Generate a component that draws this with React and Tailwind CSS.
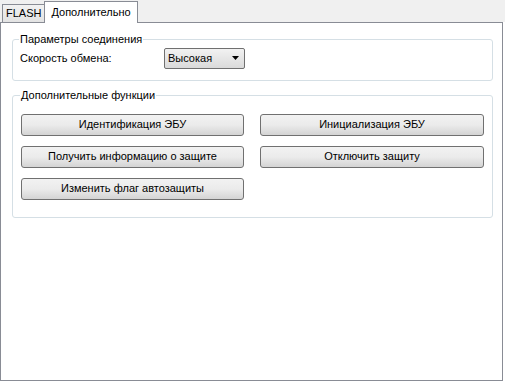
export default function App() {
  const font = { fontFamily: '"Liberation Sans", Arial, sans-serif' };
  const Btn = ({ children, w = 'w-[223px]' }) => (
    <button className={`h-[22px] ${w} rounded-[3px] border border-[#707070] bg-gradient-to-b from-[#f2f2f2] via-[#ebebeb] to-[#d4d4d4] text-[11px] text-black leading-none`}>
      {children}
    </button>
  );
  return (
    <div className="w-[505px] h-[382px] bg-white text-[11px] text-black relative" style={font}>
      <div className="h-[22px] bg-[#f0f0f0] flex items-end pl-[2px]">
        <div className="h-[18px] px-[3px] border border-b-0 border-[#898c95] bg-gradient-to-b from-[#f2f2f2] to-[#e3e3e3] flex items-center">FLASH</div>
        <div className="h-[22px] px-[6px] border border-b-0 border-[#898c95] bg-white flex items-center -mb-px relative z-10 -ml-px">Дополнительно</div>
      </div>
      <div className="h-[359px] w-[503px] border border-[#898c95] bg-white pl-[11px] pr-[9px] pt-[8px]">
        <fieldset className="border border-[#d5dfe5] rounded-[3px] px-[7px] h-[50px]">
          <legend className="px-px -ml-px">Параметры соединения</legend>
          <div className="flex items-center">
            <span className="w-[144px]">Скорость обмена:</span>
            <div className="h-[21px] w-[81px] border border-[#707070] rounded-[2px] bg-gradient-to-b from-[#f2f2f2] to-[#dadada] flex items-center justify-between pl-[3px] pr-[5px]">
              <span>Высокая</span>
              <svg width="7" height="4" viewBox="0 0 7 4"><path d="M0 0h7L3.5 4z" fill="#000" /></svg>
            </div>
          </div>
        </fieldset>
        <fieldset className="mt-[6px] border border-[#d5dfe5] rounded-[3px] px-[8px] pb-[17px]">
          <legend className="px-px -ml-px">Дополнительные функции</legend>
          <div className="grid grid-cols-[223px_224px] justify-between gap-y-[10px] mt-[10px]">
            <Btn>Идентификация ЭБУ</Btn>
            <Btn w="w-[224px]">Инициализация ЭБУ</Btn>
            <Btn>Получить информацию о защите</Btn>
            <Btn w="w-[224px]">Отключить защиту</Btn>
            <Btn>Изменить флаг автозащиты</Btn>
          </div>
        </fieldset>
      </div>
    </div>
  );
}
